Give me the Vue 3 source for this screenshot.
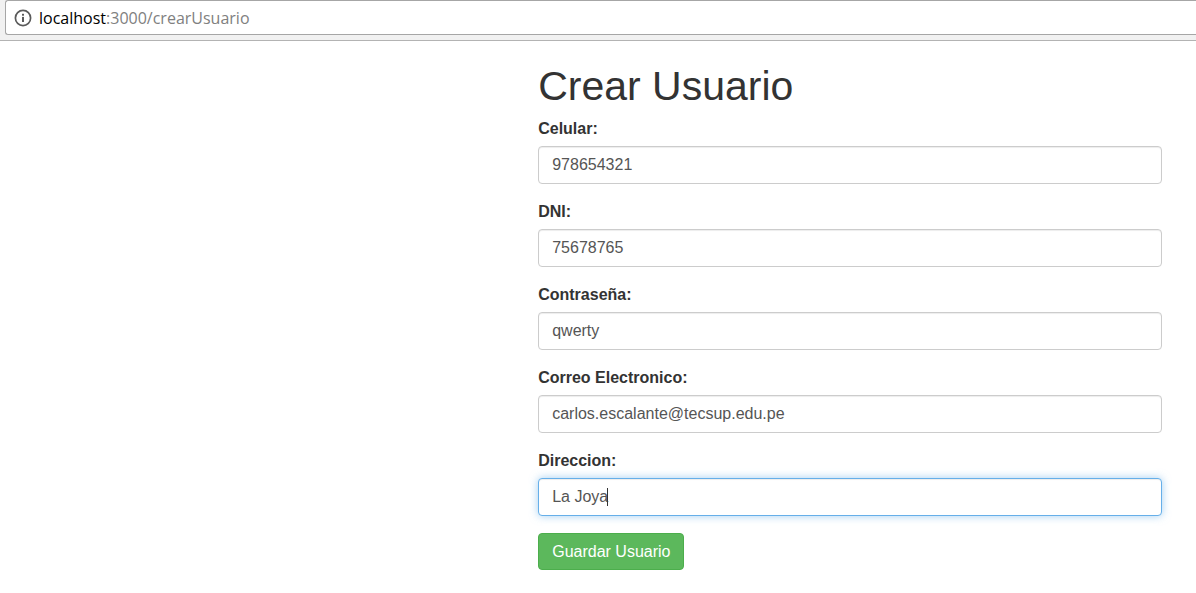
<script setup>
import { reactive, ref } from 'vue'

const fields = reactive([
  { id: 'celular', label: 'Celular:', type: 'text', value: '978654321' },
  { id: 'dni', label: 'DNI:', type: 'text', value: '75678765' },
  { id: 'contrasena', label: 'Contraseña:', type: 'text', value: 'qwerty' },
  { id: 'correo', label: 'Correo Electronico:', type: 'text', value: 'carlos.escalante@tecsup.edu.pe' },
  { id: 'direccion', label: 'Direccion:', type: 'text', value: 'La Joya' }
])
const active = ref('direccion')
</script>

<template>
  <div class="page">
    <header class="toolbar">
      <div class="address">
        <button class="info" type="button" aria-label="Información del sitio">
          <svg width="18" height="18" viewBox="0 0 18 18" aria-hidden="true">
            <circle cx="9" cy="9" r="7.6" fill="none" stroke="#5a5a5a" stroke-width="1.7" />
            <rect x="8" y="4.8" width="2" height="1.9" fill="#5a5a5a" />
            <rect x="8" y="7.9" width="2" height="5.1" fill="#5a5a5a" />
          </svg>
        </button>
        <div class="url"><span class="host">localhost</span>:3000/crearUsuario</div>
      </div>
    </header>
    <main class="content">
      <h1>Crear Usuario</h1>
      <form @submit.prevent>
        <div v-for="f in fields" :key="f.id" class="group">
          <label :for="f.id">{{ f.label }}</label>
          <div class="control">
            <input :id="f.id" v-model="f.value" :type="f.type" :class="{ active: active === f.id }" @focus="active = f.id" />
            <span v-if="active === f.id && f.id === 'direccion'" class="caret"></span>
          </div>
        </div>
        <button class="save" type="submit">Guardar Usuario</button>
      </form>
    </main>
  </div>
</template>

<style>
body {
  background: #fff;
}
</style>

<style scoped>
* {
  box-sizing: border-box;
}
.page {
  font-family: "Liberation Sans", Arial, sans-serif;
  font-size: 16px;
  line-height: 22px;
  color: #333;
}
.toolbar {
  padding: 0 0 5px 5px;
  background: #f1f1f1;
  border-bottom: 1px solid #b3b3b3;
}
.address {
  display: flex;
  align-items: center;
  gap: 7px;
  height: 35px;
  padding-left: 8px;
  background: #fff;
  border: 1px solid #a6a6a6;
  border-right: 0;
  border-radius: 3px 0 0 3px;
}
.info {
  display: flex;
  padding: 0;
  border: 0;
  background: none;
}
.url {
  font-family: "Open Sans", "Noto Sans", sans-serif;
  font-size: 16px;
  color: #808080;
}
.host {
  color: #000;
}
.content {
  padding: 22px 34px 22px 45%;
}
h1 {
  margin: 0 0 9px;
  font-size: 41px;
  font-weight: 400;
  line-height: 46px;
}
.group {
  margin-bottom: 17px;
}
label {
  display: block;
  margin-bottom: 6px;
  font-weight: 700;
}
.control {
  position: relative;
}
input {
  display: block;
  width: 100%;
  height: 38px;
  padding: 6px 13px;
  font: inherit;
  color: #555;
  background: #fff;
  border: 1px solid #ccc;
  border-radius: 4px;
  outline: 0;
  box-shadow: inset 0 1px 1px rgba(0, 0, 0, 0.075);
}
input.active {
  border-color: #66afe9;
  box-shadow: inset 0 1px 1px rgba(0, 0, 0, 0.075), 0 0 8px rgba(102, 175, 233, 0.6);
}
.caret {
  position: absolute;
  top: 10px;
  left: 69px;
  width: 1px;
  height: 18px;
  background: #333;
}
.save {
  display: block;
  height: 37px;
  padding: 0 13px;
  font: inherit;
  color: #fff;
  background: #5cb85c;
  border: 1px solid #4cae4c;
  border-radius: 4px;
}
</style>
